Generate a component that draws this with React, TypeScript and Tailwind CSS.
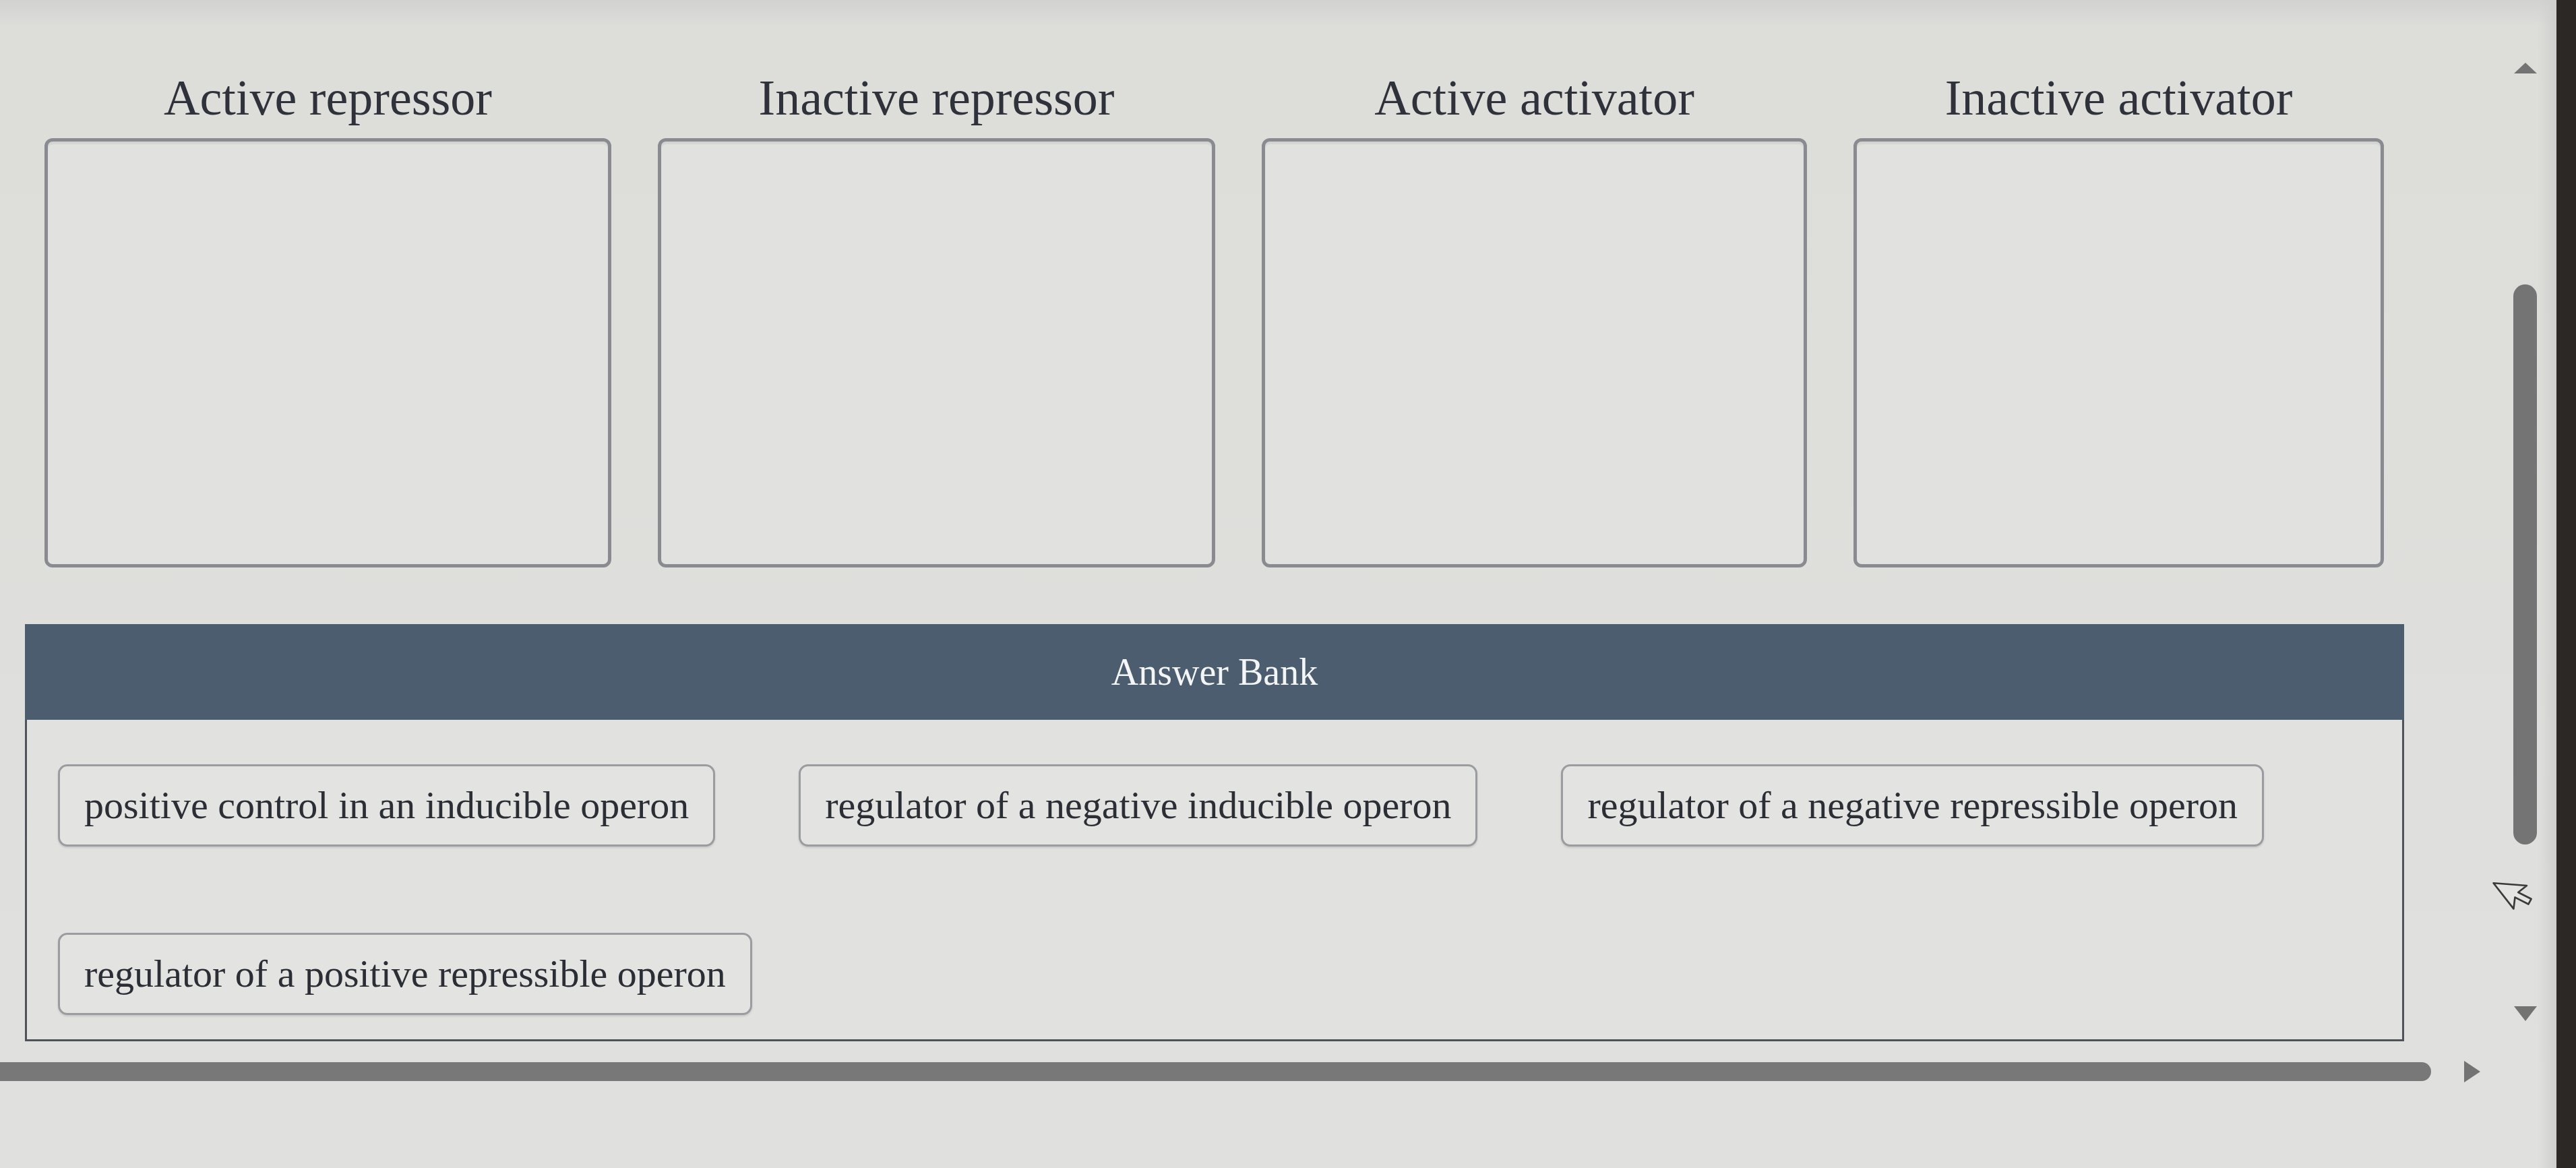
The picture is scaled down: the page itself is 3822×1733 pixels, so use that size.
import React from "react";

const serif = "font-['Liberation_Serif','Times_New_Roman',serif]";

type Zone = { label: string; width: string };

const zones: Zone[] = [
  { label: "Active repressor", width: "w-[841px]" },
  { label: "Inactive repressor", width: "w-[827px]" },
  { label: "Active activator", width: "w-[809px]" },
  { label: "Inactive activator", width: "w-[787px]" },
];

const answers = [
  "positive control in an inducible operon",
  "regulator of a negative inducible operon",
  "regulator of a negative repressible operon",
  "regulator of a positive repressible operon",
];

function DropZone({ zone }: { zone: Zone }) {
  return (
    <div className={`flex flex-col ${zone.width}`}>
      <div className="h-[80px] text-center text-[74px] leading-[80px] text-[#2f323a]">
        {zone.label}
      </div>
      <div className="mt-[20px] h-[637px] rounded-[12px] border-[5px] border-[#8a8b90] bg-[#e1e2e0] shadow-[inset_0_4px_2px_rgba(0,0,0,0.06)]" />
    </div>
  );
}

function Chip({ text }: { text: string }) {
  return (
    <div className="flex h-[122px] items-center rounded-[14px] border-[3px] border-[#9b9ca0] bg-[#e3e4e2] px-[36px] text-[58px] leading-none text-[#2b2e35] shadow-[0_2px_3px_rgba(0,0,0,0.12)]">
      {text}
    </div>
  );
}

function Triangle({ dir }: { dir: "up" | "down" | "right" }) {
  if (dir === "up") {
    return (
      <svg width="36" height="18" viewBox="0 0 36 18">
        <polygon points="18,1 35,17 1,17" fill="#737373" />
      </svg>
    );
  }
  if (dir === "down") {
    return (
      <svg width="36" height="24" viewBox="0 0 36 24">
        <polygon points="1,1 35,1 18,23" fill="#737373" />
      </svg>
    );
  }
  return (
    <svg width="26" height="34" viewBox="0 0 26 34">
      <polygon points="1,1 25,17 1,33" fill="#737373" />
    </svg>
  );
}

// mouse pointer resting beside the scrollbar
function Pointer() {
  return (
    <svg width="66" height="70" viewBox="0 0 24 26" className="-rotate-[38deg]">
      <polygon
        points="2,2 2,20 6.5,15.5 10,23 13,21.7 9.6,14.4 15.6,14.4"
        fill="#e4e4e2"
        stroke="#3a3a3a"
        strokeWidth="1"
        strokeLinejoin="round"
      />
    </svg>
  );
}

export default function App() {
  return (
    <div
      className={`flex h-[1733px] w-[3822px] overflow-hidden bg-[linear-gradient(to_bottom,#d2d3d1_0px,#dddeda_40px,#e0e1de_100%)] ${serif}`}
    >
      {/* page content */}
      <div className="flex w-[3700px] flex-col pt-[105px]">
        <div className="ml-[66px] flex gap-x-[69px]">
          {zones.map((z) => (
            <DropZone key={z.label} zone={z} />
          ))}
        </div>

        <div className="ml-[37px] mt-[84px] w-[3530px]">
          <div className="flex h-[142px] items-center justify-center bg-[#4b5d6e] text-[56px] leading-none text-[#f4f5f6]">
            Answer Bank
          </div>
          <div className="flex flex-wrap gap-x-[124px] gap-y-[128px] border-[3px] border-t-0 border-[#4f5259] bg-[#e1e2e0] pb-[36px] pl-[46px] pr-[46px] pt-[66px]">
            {answers.map((a) => (
              <Chip key={a} text={a} />
            ))}
          </div>
        </div>

        <div className="mt-[28px] flex items-center">
          <div className="h-[28px] w-[3607px] rounded-r-full bg-[#787878]" />
          <div className="ml-[48px] flex items-center">
            <Triangle dir="right" />
          </div>
        </div>
      </div>

      {/* vertical scrollbar */}
      <div className="relative flex w-[93px] flex-col items-center bg-[linear-gradient(to_right,transparent_70%,#cfcfcd)] pt-[92px]">
        <Triangle dir="up" />
        <div className="mt-[312px] h-[831px] w-[35px] rounded-full bg-[#747474]" />
        <div className="mt-[239px]">
          <Triangle dir="down" />
        </div>
        <div className="absolute left-[6px] top-[1282px]">
          <Pointer />
        </div>
      </div>

      {/* bezel */}
      <div className="w-[29px] bg-[#2b2826]" />
    </div>
  );
}
